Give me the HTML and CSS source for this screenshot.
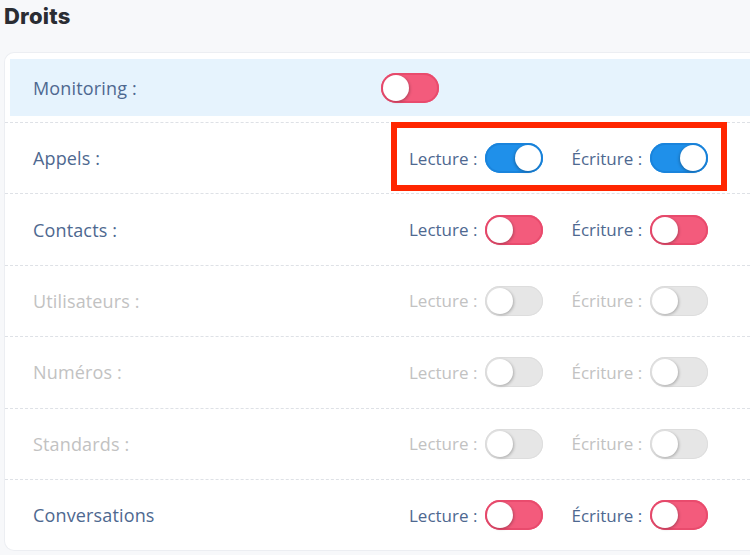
FILE: index.html
```html
<!DOCTYPE html>
<html lang="fr">
<head>
    <meta charset="UTF-8">
    <meta name="viewport" content="width=device-width, initial-scale=1.0">
    <title>Droits</title>
    <link rel="stylesheet" href="styles.css">
</head>
<body>
    <h2 class="section-title">Droits</h2>

    <div class="rights-card">
        <div class="right-row monitoring">
            <div class="right-label">Monitoring :</div>
            <span class="switch off"><span class="knob"></span></span>
        </div>

        <div class="right-row">
            <div class="right-label">Appels :</div>
            <div class="perm">Lecture : <span class="switch on"><span class="knob"></span></span></div>
            <div class="perm">Écriture : <span class="switch on"><span class="knob"></span></span></div>
            <div class="annotation"></div>
        </div>

        <div class="right-row">
            <div class="right-label">Contacts :</div>
            <div class="perm">Lecture : <span class="switch off"><span class="knob"></span></span></div>
            <div class="perm">Écriture : <span class="switch off"><span class="knob"></span></span></div>
        </div>

        <div class="right-row disabled">
            <div class="right-label">Utilisateurs :</div>
            <div class="perm">Lecture : <span class="switch"><span class="knob"></span></span></div>
            <div class="perm">Écriture : <span class="switch"><span class="knob"></span></span></div>
        </div>

        <div class="right-row disabled">
            <div class="right-label">Numéros :</div>
            <div class="perm">Lecture : <span class="switch"><span class="knob"></span></span></div>
            <div class="perm">Écriture : <span class="switch"><span class="knob"></span></span></div>
        </div>

        <div class="right-row disabled">
            <div class="right-label">Standards :</div>
            <div class="perm">Lecture : <span class="switch"><span class="knob"></span></span></div>
            <div class="perm">Écriture : <span class="switch"><span class="knob"></span></span></div>
        </div>

        <div class="right-row">
            <div class="right-label">Conversations</div>
            <div class="perm">Lecture : <span class="switch off"><span class="knob"></span></span></div>
            <div class="perm">Écriture : <span class="switch off"><span class="knob"></span></span></div>
        </div>
    </div>
</body>
</html>
```

FILE: styles.css
```css
body {
    margin: 0;
    padding: 0 0 0 4px;
    background: #F7F8FA;
    font-family: "Open Sans", "Liberation Sans", sans-serif;
    overflow: hidden;
    height: 555px;
}

.section-title {
    font-family: "Inter", "Liberation Sans", sans-serif;
    font-weight: 800;
    font-size: 22px;
    letter-spacing: 0.2px;
    color: #2A2D33;
    margin: 0;
    padding-top: 4px;
    height: 48px;
    line-height: 24px;
}

.rights-card {
    width: 746px;
    box-sizing: border-box;
    background: #FFFFFF;
    border: 1px solid #ECEEF2;
    border-right: none;
    border-radius: 10px 0 0 10px;
}

.right-row {
    position: relative;
    display: flex;
    align-items: center;
    height: 70.4px;
    padding-left: 28px;
    border-top: 1px dashed #DEE1E6;
    font-size: 17px;
    color: #4E6890;
}

.right-row.monitoring {
    height: 57px;
    margin: 6px 0 6px 5px;
    padding-left: 23px;
    border-top: none;
    background: #E6F3FD;
}

.right-row.disabled {
    color: #C2C2C2;
}

.right-label {
    width: 348px;
    flex-shrink: 0;
    font-size: 18px;
    letter-spacing: 0.15px;
}

.perm {
    display: flex;
    align-items: center;
    gap: 8px;
    margin-left: 28px;
}

.switch {
    position: relative;
    display: inline-block;
    width: 58px;
    height: 30px;
    border-radius: 15px;
    background: #E6E6E6;
    box-shadow: inset 0 0 0 1px #DDDDDD;
}

.switch .knob {
    position: absolute;
    top: 2px;
    left: 2px;
    width: 26px;
    height: 26px;
    border-radius: 50%;
    background: #FFFFFF;
    box-shadow: 1px 1px 3px rgba(0, 0, 0, 0.25);
}

.switch.off {
    background: #F35B7C;
    box-shadow: inset 0 0 0 2px #E94B6D;
}

.switch.on {
    background: #1F90EA;
    box-shadow: inset 0 0 0 2px #1A84DC;
}

.switch.on .knob {
    left: auto;
    right: 2px;
    box-shadow: -1px 1px 3px rgba(0, 0, 0, 0.25);
}

.annotation {
    position: absolute;
    top: -1px;
    left: 386px;
    width: 336px;
    height: 69px;
    box-sizing: border-box;
    border: 6px solid #FF2600;
}
```
